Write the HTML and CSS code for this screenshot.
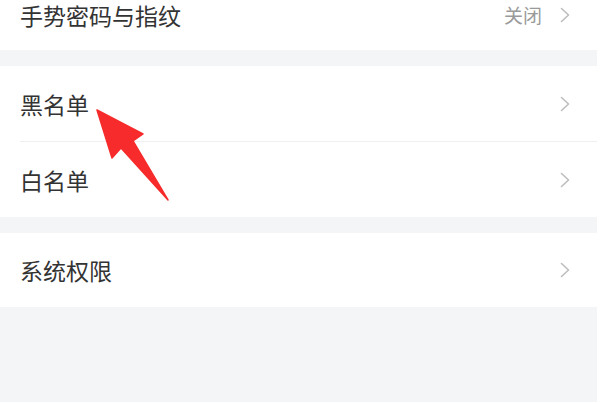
FILE: index.html
```html
<!DOCTYPE html>
<html lang="zh-CN">
<head>
<meta charset="utf-8">
<title>设置</title>
<link rel="stylesheet" href="styles.css">
</head>
<body>
<div class="page">
  <div class="group">
    <div class="row row-first">
      <span class="label">手势密码与指纹</span>
      <span class="right"><span class="value">关闭</span><svg class="chev" width="10" height="16" viewBox="0 0 10 16"><polyline points="1.5,1.5 8.5,8 1.5,14.5"/></svg></span>
    </div>
  </div>
  <div class="group">
    <div class="row">
      <span class="label">黑名单</span>
      <span class="right"><svg class="chev" width="10" height="16" viewBox="0 0 10 16"><polyline points="1.5,1.5 8.5,8 1.5,14.5"/></svg></span>
    </div>
    <div class="divider"></div>
    <div class="row">
      <span class="label">白名单</span>
      <span class="right"><svg class="chev" width="10" height="16" viewBox="0 0 10 16"><polyline points="1.5,1.5 8.5,8 1.5,14.5"/></svg></span>
    </div>
  </div>
  <div class="group">
    <div class="row row-last">
      <span class="label">系统权限</span>
      <span class="right"><svg class="chev" width="10" height="16" viewBox="0 0 10 16"><polyline points="1.5,1.5 8.5,8 1.5,14.5"/></svg></span>
    </div>
  </div>
  <svg class="arrow" width="597" height="402" viewBox="0 0 597 402">
    <polygon points="97,110 143,134 133,141 168,200 121,148 112,158"/>
  </svg>
</div>
</body>
</html>
```
FILE: styles.css
```css
html, body {
  margin: 0;
  padding: 0;
  background: #ffffff;
}
.page {
  position: relative;
  width: 597px;
  height: 402px;
  background: #f4f5f7;
  display: flex;
  flex-direction: column;
  gap: 16px;
  overflow: hidden;
  font-family: "Noto Sans CJK SC", "Noto Sans", sans-serif;
}
.group {
  background: #ffffff;
  display: flex;
  flex-direction: column;
}
.row {
  height: 75px;
  display: flex;
  align-items: center;
  justify-content: space-between;
  padding: 0 27px 0 20px;
  box-sizing: border-box;
}
.row-first {
  height: 50px;
  align-items: flex-start;
}
.row-first .label,
.row-first .right {
  height: 30px;
  line-height: 30px;
}
.row-last {
  height: 74px;
}
.label {
  font-size: 23px;
  color: #333333;
  line-height: 30px;
}
.right {
  display: flex;
  align-items: center;
  gap: 18px;
}
.value {
  font-size: 19px;
  color: #9a9a9a;
}
.chev {
  display: block;
}
.chev polyline {
  fill: none;
  stroke: #bdbdbd;
  stroke-width: 1.6;
  stroke-linecap: round;
  stroke-linejoin: round;
}
.divider {
  height: 1px;
  margin-left: 20px;
  background: #efefef;
}
.arrow {
  position: absolute;
  left: 0;
  top: 0;
  pointer-events: none;
}
.arrow polygon {
  fill: #f72b2b;
  stroke: #f72b2b;
  stroke-width: 1.5;
  stroke-linejoin: round;
}
```
